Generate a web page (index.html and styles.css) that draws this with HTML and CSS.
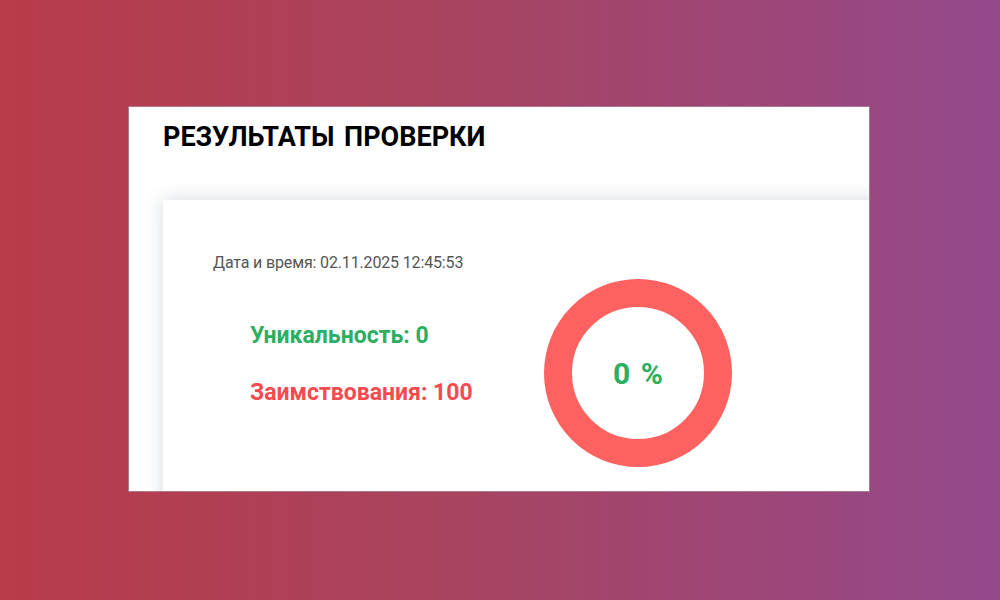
FILE: index.html
```html
<!DOCTYPE html>
<html lang="ru">
<head>
    <meta charset="UTF-8">
    <meta name="viewport" content="width=device-width, initial-scale=1.0">
    <title>Результаты проверки</title>
    <link rel="stylesheet" href="styles.css">
</head>
<body>
    <div class="stage">
        <div class="panel">
            <h1 class="title">РЕЗУЛЬТАТЫ ПРОВЕРКИ</h1>

            <div class="result-card">
                <div class="check-date">Дата и время: 02.11.2025 12:45:53</div>

                <div class="result-row">
                    <div class="stats">
                        <div class="stat unique">Уникальность: 0</div>
                        <div class="stat borrowed">Заимствования: 100</div>
                    </div>

                    <div class="donut">
                        <div class="donut-hole">0 %</div>
                    </div>
                </div>
            </div>
        </div>
    </div>
</body>
</html>
```

FILE: styles.css
```css
body {
    margin: 0;
    font-family: Roboto, "Noto Sans", sans-serif;
    background: linear-gradient(90deg, #b83c4a 0%, #a8435f 45%, #94498c 100%);
    color: #333;
}

.stage {
    height: 600px;
    padding: 106px 0 0 128px;
    box-sizing: border-box;
}

.panel {
    width: 742px;
    height: 386px;
    box-sizing: border-box;
    background-color: #fff;
    border: 1px solid rgba(110, 10, 50, 0.55);
    overflow: hidden;
    padding: 0 0 0 34px;
}

.title {
    margin: 0;
    padding-top: 13px;
    font-size: 27px;
    font-weight: 700;
    color: #000;
    word-spacing: 3px;
    line-height: 34px;
}

.result-card {
    margin-top: 46px;
    width: 760px;
    height: 320px;
    background-color: #fff;
    box-shadow: 0 0 18px rgba(40, 60, 90, 0.2);
    padding: 52px 0 0 50px;
    box-sizing: border-box;
}

.check-date {
    font-size: 16px;
    color: #555;
    line-height: 22px;
    letter-spacing: -0.15px;
}

.result-row {
    display: flex;
    align-items: flex-start;
    margin-top: 5px;
}

.stats {
    width: 294px;
    padding: 43px 0 0 37px;
}

.stat {
    font-size: 23px;
    font-weight: 700;
    line-height: 28px;
}

.stat.unique {
    color: #2eae62;
}

.stat.borrowed {
    color: #f54b50;
    margin-top: 29px;
}

.donut {
    width: 188px;
    height: 188px;
    box-sizing: border-box;
    border-radius: 50%;
    border: 28px solid #fe6260;
    display: flex;
    justify-content: center;
    align-items: center;
}

.donut-hole {
    font-size: 30px;
    font-weight: 700;
    color: #2eae62;
    word-spacing: 3px;
}
```
